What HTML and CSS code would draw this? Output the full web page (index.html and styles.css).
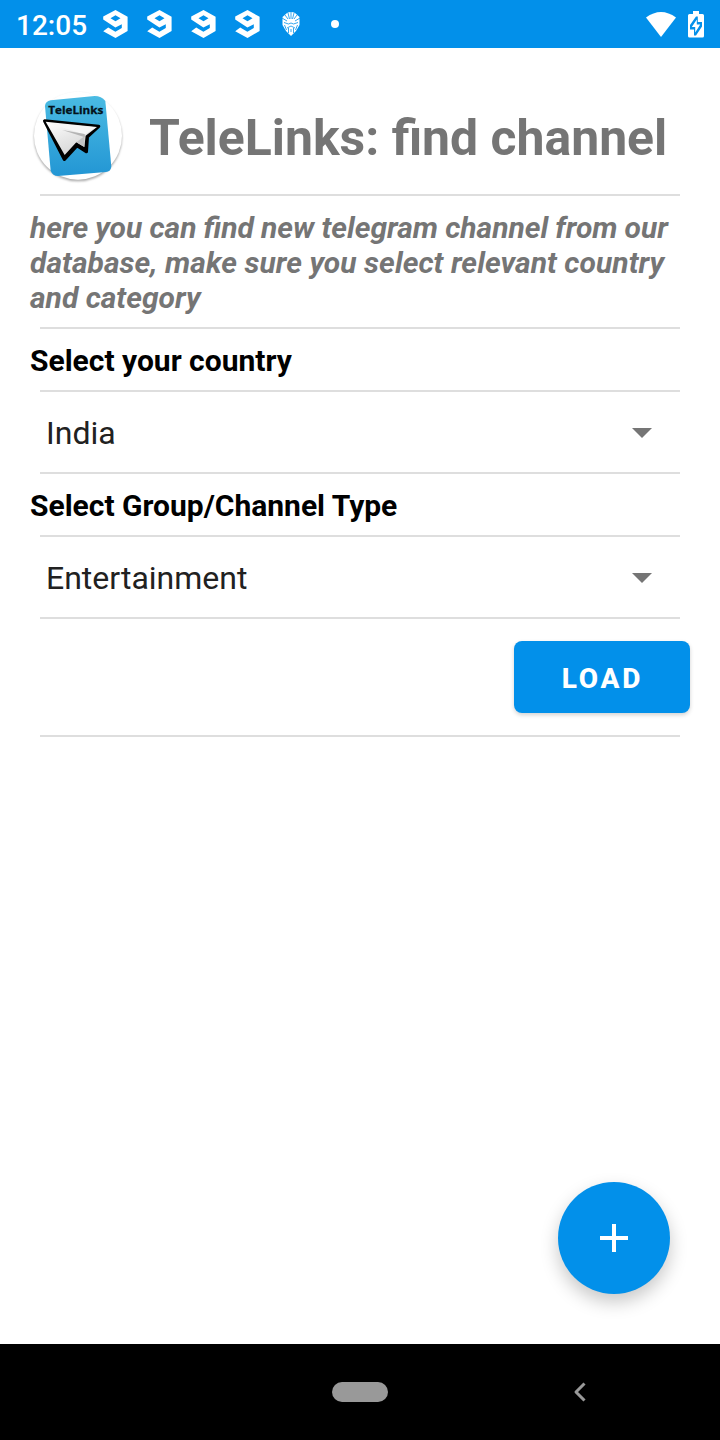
FILE: index.html
```html
<!DOCTYPE html>
<html lang="en">
<head>
<meta charset="utf-8">
<title>TeleLinks</title>
<link rel="stylesheet" href="styles.css">
</head>
<body>
<svg class="defs" aria-hidden="true">
  <symbol id="nine" viewBox="0 0 26 28">
    <path fill-rule="evenodd" d="M12.500 0 24.600 6.800V21L12.500 28 .2 21.200 5.200 17.600 12.400 21.800 18.800 18V14.200L12.400 17.400 .2 9.600V6.600ZM12.500 5.200 7.500 8.200 12.500 11.200 17.500 8.200Z"/>
  </symbol>
</svg>
<header class="status">
  <span class="clock">12:05</span>
  <div class="notifications">
    <svg class="nine"><use href="#nine"/></svg>
    <svg class="nine"><use href="#nine"/></svg>
    <svg class="nine"><use href="#nine"/></svg>
    <svg class="nine"><use href="#nine"/></svg>
  </div>
  <svg class="mask" viewBox="0 0 18 24">
    <path d="M5 1Q9-1 13 1L17.500 5V13L14 19 9 24 4 19 .5 13V5Z"/>
    <g class="mask-lines"><path d="M9 0V7M6 1 7.500 7M12 1 10.500 7M3 3 6 7M15 3 12 7M0 6 5 9M18 6 13 9M2 10.500 6.500 12 9 11 11.500 12 16 10.500M5 16 9 14 13 16M9 17V20M6.500 16V21M11.500 16V21M2.500 13 4.500 18M15.500 13 13.500 18"/></g>
  </svg>
  <span class="dot"></span>
  <svg class="wifi" viewBox="0 0 30 25"><path d="M0 5.500Q15-5.500 30 5.500L15 25Z"/></svg>
  <svg class="battery" viewBox="0 0 16 27"><path d="M5 0H11V3H14.500Q16 3 16 4.500V25Q16 26.500 14.500 26.500H1.500Q0 26.500 0 25V4.500Q0 3 1.500 3H5Z"/><path class="battery-gap" d="M9.800 5.500V11H14V15.500L8 24.500H6V18.500H2V14L8 5.500Z"/><path d="M8.800 8.500V13.500H12.200L7.200 21.500V16H3.800Z"/></svg>
</header>

<main class="content">
  <div class="brand">
    <svg class="logo" viewBox="0 0 330 330" role="img" aria-label="TeleLinks">
      <defs>
        <linearGradient id="card" x1="0" y1="0" x2="0" y2="1"><stop offset="0" stop-color="#4abbe3"/><stop offset="1" stop-color="#2396d4"/></linearGradient>
        <linearGradient id="paper" x1="0" y1="0" x2=".6" y2="1"><stop offset="0" stop-color="#fff"/><stop offset=".6" stop-color="#e4e4e4"/><stop offset="1" stop-color="#d5d5d5"/></linearGradient>
        <filter id="soft"><feGaussianBlur stdDeviation="3"/></filter>
      </defs>
      <circle class="logo-shadow" cx="162" cy="160" r="132" filter="url(#soft)"/>
      <circle class="logo-disc" cx="162" cy="155" r="132"/>
      <path fill="url(#card)" d="M63 66Q64 52 80 49L212 36Q232 36 244 51L262 248Q260 262 246 264L102 276Q86 276 80 260Z"/>
      <text class="logo-text" x="73" y="91" textLength="165" lengthAdjust="spacingAndGlyphs">TeleLinks</text>
      <path class="plane-outline" d="M62 111 224 127 190 158 187 203 159 185 121 226Z"/>
      <path fill="url(#paper)" d="M65 113 219 129 185 155 181 189 157 175 122 213Z"/>
      <path class="fold" d="M75 117 182 152 216 130Z"/>
      <path class="fold-dark" d="M115 138 182 150 183 160Z"/>
      <path class="fold-side" d="M182 156 181 189 157 175Z"/>
    </svg>
    <h1 class="title">TeleLinks: find channel</h1>
  </div>
  <p class="intro"><span class="line-tight">here you can find new telegram channel from our</span><br><span class="line-wide">database, make sure you select relevant country</span><br>and category</p>
  <h2 class="label">Select your country</h2>
  <div class="select"><span>India</span><svg class="caret" viewBox="0 0 20 10"><path d="M0 0H20L10 10Z"/></svg></div>
  <h2 class="label">Select Group/Channel Type</h2>
  <div class="select"><span>Entertainment</span><svg class="caret" viewBox="0 0 20 10"><path d="M0 0H20L10 10Z"/></svg></div>
  <div class="actions"><button class="load">LOAD</button></div>
  <button class="fab" aria-label="Add"><svg class="plus" viewBox="0 0 28 28"><path d="M12 0H16V12H28V16H16V28H12V16H0V12H12Z"/></svg></button>
</main>

<nav class="navbar">
  <span class="home"></span>
  <svg class="back" viewBox="0 0 14 22"><path d="M11.500 2.500 3 11 11.500 19.500"/></svg>
</nav>
</body>
</html>
```
FILE: styles.css
```css
* { box-sizing: border-box; }
body {
  margin: 0;
  width: 720px;
  height: 1440px;
  display: flex;
  flex-direction: column;
  overflow: hidden;
  background: #fff;
  font-family: Roboto, sans-serif;
}
svg { display: block; flex: none; }
h1, h2, p { margin: 0; white-space: nowrap; }
button { border: 0; padding: 0; background: #0290ea; color: #fff; font-family: inherit; }
.defs { position: absolute; width: 0; height: 0; }

.status {
  height: 48px;
  flex: none;
  display: flex;
  align-items: center;
  padding: 0 16px;
  background: #0290ea;
  color: #fff;
  fill: #fff;
}
.clock { width: 87px; font-size: 28px; font-weight: 500; line-height: 46px; padding-top: 3px; }
.notifications { display: flex; gap: 18px; }
.nine { width: 26px; height: 28px; }
.mask { width: 18px; height: 24px; margin-left: 21px; }
.mask-lines { fill: none; stroke: #0290ea; stroke-width: .8; }
.dot { width: 8px; height: 8px; margin-left: 31px; border-radius: 50%; background: #fff; }
.wifi { width: 30px; height: 25px; margin-left: auto; }
.battery { width: 16px; height: 27px; margin-left: 12px; }
.battery-gap { fill: #0290ea; }

.content { position: relative; flex: 1; display: flex; flex-direction: column; }
.brand, .intro, .label, .select, .actions {
  flex: none;
  background: linear-gradient(#dedede, #dedede) 40px 100% / 640px 2px no-repeat;
}
.brand { height: 148px; padding: 36px 0 0 24px; display: flex; }
.logo { width: 110px; height: 110px; }
.logo-shadow { fill: #aaa; }
.logo-disc { fill: #fff; }
.logo-text { font-family: "Open Sans", sans-serif; font-weight: 700; font-size: 34px; fill: #04131c; stroke: #04131c; stroke-width: 1; }
.plane-outline { fill: #000; stroke: #000; stroke-width: 10; stroke-linejoin: round; }
.fold { fill: #f6f6f6; }
.fold-dark { fill: #b5b5b5; }
.fold-side { fill: #c4c4c4; }
.title { margin-left: 15px; font-size: 49.9px; font-weight: 700; line-height: 60px; padding-top: 24px; color: #757575; }
.intro { height: 133px; padding: 14px 0 0 30px; font-size: 30px; font-weight: 700; font-style: italic; line-height: 35px; color: #757575; }
.line-tight { word-spacing: -.3px; }
.line-wide { letter-spacing: .05px; }
.label { height: 63px; padding: 14px 0 0 30px; font-size: 30px; font-weight: 700; line-height: 35px; color: #000; }
.select { height: 82px; padding: 0 68px 0 46px; display: flex; align-items: center; justify-content: space-between; font-size: 32px; line-height: 38px; color: #212121; }
.caret { width: 20px; height: 10px; fill: #757575; }
.actions { height: 118px; padding: 22px 30px 0 0; display: flex; justify-content: flex-end; }
.load { width: 176px; height: 72px; border-radius: 8px; font-size: 28px; font-weight: 800; letter-spacing: 2.8px; line-height: 72px; padding: 2px 0 0 1px; box-shadow: 0 2px 4px rgba(0, 0, 0, .18); }
.fab { position: absolute; right: 50px; bottom: 50px; width: 112px; height: 112px; border-radius: 50%; display: grid; place-items: center; box-shadow: 0 8px 18px rgba(0, 0, 0, .22); }
.plus { width: 28px; height: 28px; fill: #fff; }

.navbar { height: 96px; flex: none; display: flex; align-items: center; background: #000; }
.home { width: 56px; height: 20px; margin-left: 332px; border-radius: 10px; background: #999; }
.back { width: 14px; height: 22px; margin-left: 185px; fill: none; stroke: #999; stroke-width: 3; stroke-linejoin: round; }
```
